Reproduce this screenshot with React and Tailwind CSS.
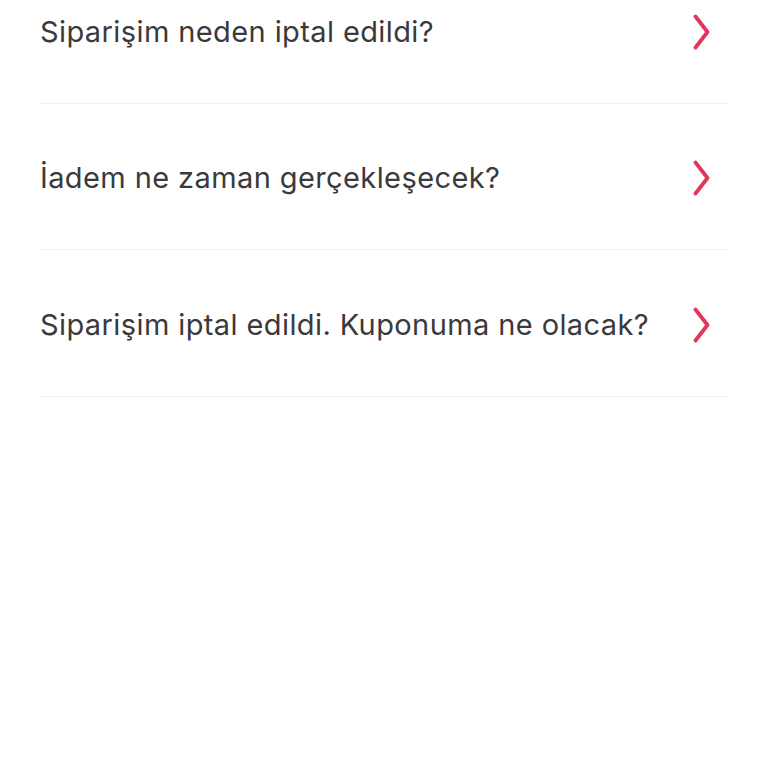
import { useState } from "react";

const questions = [
  "Siparişim neden iptal edildi?",
  "İadem ne zaman gerçekleşecek?",
  "Siparişim iptal edildi. Kuponuma ne olacak?",
];

const rowClasses = [
  "h-[104px] pb-[40px]",
  "h-[146px] pt-[3px]",
  "h-[147px] pt-[3px]",
];

function Chevron() {
  return (
    <svg width="20" height="36" viewBox="0 0 20 36" fill="none">
      <polyline
        points="3.5,2.5 15.5,18 3.5,33.5"
        stroke="#e0385c"
        strokeWidth="3.8"
        strokeLinecap="round"
        strokeLinejoin="round"
      />
    </svg>
  );
}

export default function App() {
  const [selected, setSelected] = useState(null);

  return (
    <div className="min-h-screen bg-white" style={{ fontFamily: 'Inter, "Liberation Sans", Arial, sans-serif' }}>
      <ul className="px-[40px]">
        {questions.map((q, i) => (
          <li
            key={q}
            onClick={() => setSelected(i)}
            className={`flex items-center justify-between border-b border-[#efefef] cursor-pointer ${rowClasses[i]}`}
          >
            <span className="text-[29px] text-[#3a3a3c] tracking-[0.4px]">{q}</span>
            <span className="mr-[16px]">
              <Chevron />
            </span>
          </li>
        ))}
      </ul>
    </div>
  );
}
